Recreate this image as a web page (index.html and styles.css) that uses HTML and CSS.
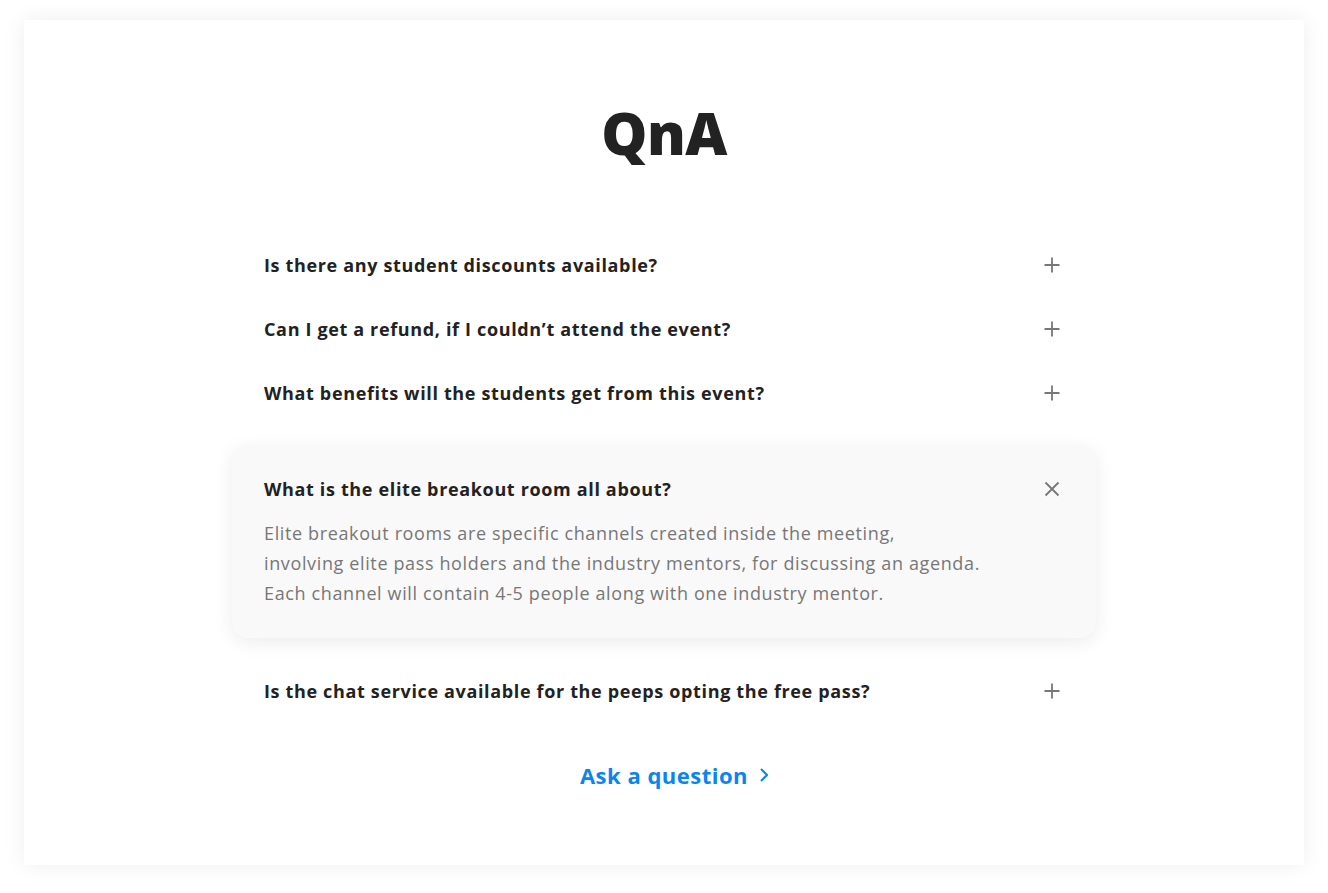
FILE: index.html
```html
<!DOCTYPE html>
<html lang="en">
<head>
<meta charset="utf-8">
<title>QnA</title>
<link rel="stylesheet" href="styles.css">
</head>
<body>
<div class="page">
  <section class="card">
    <h1 class="title">QnA</h1>
    <div class="faq">
      <div class="row">
        <span class="q">Is there any student discounts available?</span>
        <svg class="icon" viewBox="0 0 16 16"><path d="M8 0.5V15.5M0.5 8H15.5"/></svg>
      </div>
      <div class="row">
        <span class="q">Can I get a refund, if I couldn’t attend the event?</span>
        <svg class="icon" viewBox="0 0 16 16"><path d="M8 0.5V15.5M0.5 8H15.5"/></svg>
      </div>
      <div class="row">
        <span class="q">What benefits will the students get from this event?</span>
        <svg class="icon" viewBox="0 0 16 16"><path d="M8 0.5V15.5M0.5 8H15.5"/></svg>
      </div>
      <div class="open">
        <div class="open-head">
          <span class="q">What is the elite breakout room all about?</span>
          <svg class="icon" viewBox="0 0 16 16"><path d="M1.5 1.5L14.5 14.5M14.5 1.5L1.5 14.5"/></svg>
        </div>
        <p class="answer">Elite breakout rooms are specific channels created inside the meeting,<br>involving elite pass holders and the industry mentors, for discussing an agenda.<br>Each channel will contain 4-5 people along with one industry mentor.</p>
      </div>
      <div class="row">
        <span class="q">Is the chat service available for the peeps opting the free pass?</span>
        <svg class="icon" viewBox="0 0 16 16"><path d="M8 0.5V15.5M0.5 8H15.5"/></svg>
      </div>
    </div>
    <a class="ask" href="#">Ask a question <svg class="chev" viewBox="0 0 8 14"><path d="M1 1L7 7L1 13"/></svg></a>
  </section>
</div>
</body>
</html>
```
FILE: styles.css
```css
* { box-sizing: border-box; }
html, body { margin: 0; padding: 0; background: #ffffff; }
body { font-family: "Open Sans", "Noto Sans", sans-serif; color: #222222; }
.page { padding: 20px 24px 28px; }
.card {
  height: 845px;
  background: #ffffff;
  box-shadow: 0 0 22px rgba(0, 0, 0, 0.07);
  display: flex;
  flex-direction: column;
  align-items: center;
  padding-top: 77px;
}
.title {
  margin: 0;
  font-size: 58px;
  line-height: 72px;
  font-weight: 800;
  color: #222222;
  letter-spacing: -0.5px;
}
.faq {
  width: 864px;
  margin-top: 64px;
  display: flex;
  flex-direction: column;
}
.row, .open-head {
  display: flex;
  align-items: center;
  justify-content: space-between;
}
.row { padding: 21px 36px 21px 32px; }
.q {
  font-size: 18px;
  line-height: 22px;
  font-weight: 700;
  letter-spacing: 0.65px;
  color: #222222;
}
.icon { width: 16px; height: 16px; flex: none; }
.icon path { stroke: #777777; stroke-width: 1.8; fill: none; }
.open {
  margin: 21px 0;
  background: #f9f9f9;
  border-radius: 16px;
  box-shadow: 0 4px 20px rgba(0, 0, 0, 0.08);
  padding: 32px 36px 30px 32px;
}
.answer {
  margin: 18px 0 0;
  font-size: 18px;
  line-height: 30px;
  letter-spacing: 0.63px;
  color: #777777;
}
.ask {
  margin-top: 40px;
  margin-left: 20px;
  display: flex;
  align-items: center;
  gap: 12px;
  font-size: 22px;
  line-height: 24px;
  font-weight: 700;
  letter-spacing: 0.5px;
  color: #0a84f0;
  text-decoration: none;
}
.chev { width: 8px; height: 14px; }
.chev path { stroke: #0a84f0; stroke-width: 2; fill: none; }
```
